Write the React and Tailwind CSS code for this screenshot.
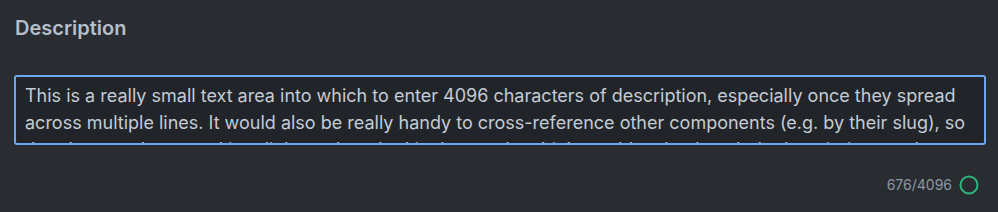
import React from "react";

const text =
  "This is a really small text area into which to enter 4096 characters of description, especially once they spread across multiple lines. It would also be really handy to cross-reference other components (e.g. by their slug), so that they can be turned into links and tracked in the graph, which would make the whole description much more useful for anyone reading it later on, and it would also help with search and discovery across the entire catalog of components that the team owns and maintains over time.";

export default function App() {
  return (
    <div className="w-[998px] h-[212px] bg-[#292d32] px-[14px] pt-[14px] font-['Inter',sans-serif]">
      {/* label */}
      <h2 className="text-[20px] leading-[28px] font-semibold text-[#b4bfcc] pl-px">
        Description
      </h2>

      {/* textarea */}
      <textarea
        defaultValue={text}
        className="mt-[33px] block w-[972px] h-[70px] resize-none overflow-hidden rounded-[3px] border-2 border-[#6fa5f0] bg-[#212529] px-[9px] pt-[5px] pb-0 text-[18px] leading-[27px] text-[#c3cbd5] outline-none"
      />

      {/* counter */}
      <div className="mt-[30px] flex items-center justify-end gap-[7px] pr-[5px]">
        <span className="text-[14px] leading-[20px] text-[#8d97a3]">676/4096</span>
        <svg width="20" height="20" viewBox="0 0 20 20">
          <circle cx="10" cy="10" r="8.5" fill="none" stroke="#2db37a" strokeWidth="2" />
        </svg>
      </div>
    </div>
  );
}
